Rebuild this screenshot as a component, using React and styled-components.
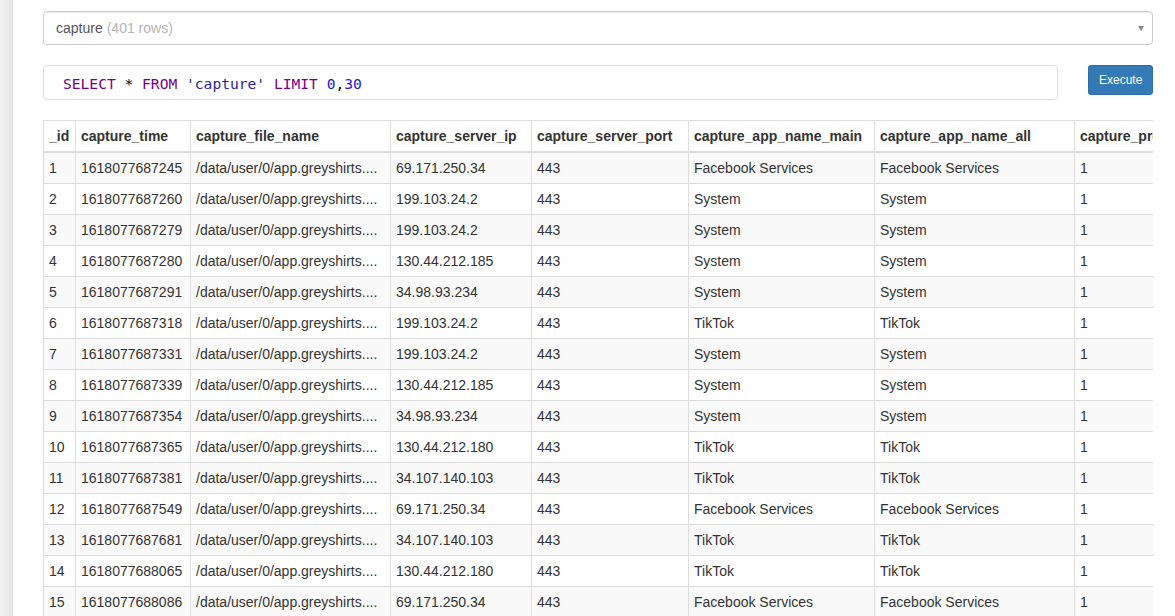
import React from 'react';
import styled, { createGlobalStyle } from 'styled-components';

const GlobalStyle = createGlobalStyle`
  html, body {
    margin: 0;
    padding: 0;
    background: #fff;
  }
  body {
    font-family: 'Liberation Sans', Arial, sans-serif;
    font-size: 14px;
    line-height: 1.42857;
    color: #333;
    overflow: hidden;
  }
  * {
    box-sizing: border-box;
  }
`;

const columns = [
  { key: '_id', width: 32 },
  { key: 'capture_time', width: 115 },
  { key: 'capture_file_name', width: 200 },
  { key: 'capture_server_ip', width: 141 },
  { key: 'capture_server_port', width: 157 },
  { key: 'capture_app_name_main', width: 186 },
  { key: 'capture_app_name_all', width: 200 },
  { key: 'capture_protocol', width: 79 },
];

const rows = [
  [1, '1618077687245', '69.171.250.34', 'Facebook Services'],
  [2, '1618077687260', '199.103.24.2', 'System'],
  [3, '1618077687279', '199.103.24.2', 'System'],
  [4, '1618077687280', '130.44.212.185', 'System'],
  [5, '1618077687291', '34.98.93.234', 'System'],
  [6, '1618077687318', '199.103.24.2', 'TikTok'],
  [7, '1618077687331', '199.103.24.2', 'System'],
  [8, '1618077687339', '130.44.212.185', 'System'],
  [9, '1618077687354', '34.98.93.234', 'System'],
  [10, '1618077687365', '130.44.212.180', 'TikTok'],
  [11, '1618077687381', '34.107.140.103', 'TikTok'],
  [12, '1618077687549', '69.171.250.34', 'Facebook Services'],
  [13, '1618077687681', '34.107.140.103', 'TikTok'],
  [14, '1618077688065', '130.44.212.180', 'TikTok'],
  [15, '1618077688086', '69.171.250.34', 'Facebook Services'],
];

const App = () => {
  return (
    <>
      <GlobalStyle />
      <Page>
        <SideEdge />
        <Main>
          <TableSelect>
            <span>capture</span>
            <RowCount>(401 rows)</RowCount>
            <Caret />
          </TableSelect>

          <QueryRow>
            <Editor>
              <Kw>SELECT</Kw> * <Kw>FROM</Kw> <Str>'capture'</Str> <Kw>LIMIT</Kw>{' '}
              <Num>0</Num>,<Num>30</Num>
            </Editor>
            <ExecuteButton>Execute</ExecuteButton>
          </QueryRow>

          <TableWrap>
            <DataTable>
              <colgroup>
                {columns.map((c) => (
                  <col key={c.key} style={{ width: c.width }} />
                ))}
              </colgroup>
              <thead>
                <tr>
                  {columns.map((c) => (
                    <th key={c.key}>{c.key}</th>
                  ))}
                </tr>
              </thead>
              <tbody>
                {rows.map(([id, time, ip, app]) => (
                  <tr key={id}>
                    <td>{id}</td>
                    <td>{time}</td>
                    <td>/data/user/0/app.greyshirts....</td>
                    <td>{ip}</td>
                    <td>443</td>
                    <td>{app}</td>
                    <td>{app}</td>
                    <td>1</td>
                  </tr>
                ))}
              </tbody>
            </DataTable>
          </TableWrap>
        </Main>
      </Page>
    </>
  );
};

export default App;

const Page = styled.div`
  display: flex;
  width: 1175px;
  height: 616px;
  overflow: hidden;
`;

const SideEdge = styled.div`
  width: 13px;
  flex-shrink: 0;
  background: linear-gradient(to right, #f3f3f3, #e4e4e4);
`;

const Main = styled.div`
  width: 1110px;
  margin-left: 30px;
  padding-top: 11px;
  display: flex;
  flex-direction: column;
`;

const TableSelect = styled.div`
  position: relative;
  height: 34px;
  padding: 6px 12px;
  border: 1px solid #ccc;
  border-radius: 4px;
  box-shadow: inset 0 1px 1px rgba(0, 0, 0, 0.075);
  color: #555;
  font-size: 14px;
  line-height: 20px;
`;

const RowCount = styled.span`
  color: #b5b5b5;
  margin-left: 4px;
`;

const Caret = styled.span`
  position: absolute;
  right: 8px;
  top: 14px;
  width: 0;
  height: 0;
  border-left: 3px solid transparent;
  border-right: 3px solid transparent;
  border-top: 5px solid #888;
`;

const QueryRow = styled.div`
  display: flex;
  align-items: flex-start;
  justify-content: space-between;
  margin-top: 20px;
`;

const Editor = styled.div`
  width: 1015px;
  height: 35px;
  padding: 1px 19px 0;
  border: 1px solid #ddd;
  border-radius: 4px;
  font-family: 'DejaVu Sans Mono', 'Liberation Mono', monospace;
  font-size: 14.6px;
  line-height: 34px;
  color: #000;
  white-space: pre;
`;

const Kw = styled.span`
  color: #770088;
`;

const Str = styled.span`
  color: #2a1f9e;
`;

const Num = styled.span`
  color: #1a1ad6;
`;

const ExecuteButton = styled.button`
  width: 65px;
  height: 30px;
  padding: 5px 10px;
  background: #337ab7;
  border: 1px solid #2e6da4;
  border-radius: 3px;
  color: #fff;
  font-family: 'Liberation Sans', Arial, sans-serif;
  font-size: 12px;
  line-height: 18px;
`;

const TableWrap = styled.div`
  margin-top: 20px;
  width: 1110px;
  overflow: hidden;
`;

const DataTable = styled.table`
  table-layout: fixed;
  width: 1110px;
  border-collapse: collapse;
  border-spacing: 0;

  th,
  td {
    padding: 5px;
    border: 1px solid #ddd;
    line-height: 20px;
    text-align: left;
    white-space: nowrap;
    overflow: hidden;
    vertical-align: top;
  }

  th:last-child,
  td:last-child {
    border-right: none;
  }

  th {
    font-weight: bold;
    border-bottom: 2px solid #ddd;
  }

  tbody tr:nth-child(odd) {
    background: #f9f9f9;
  }
`;
